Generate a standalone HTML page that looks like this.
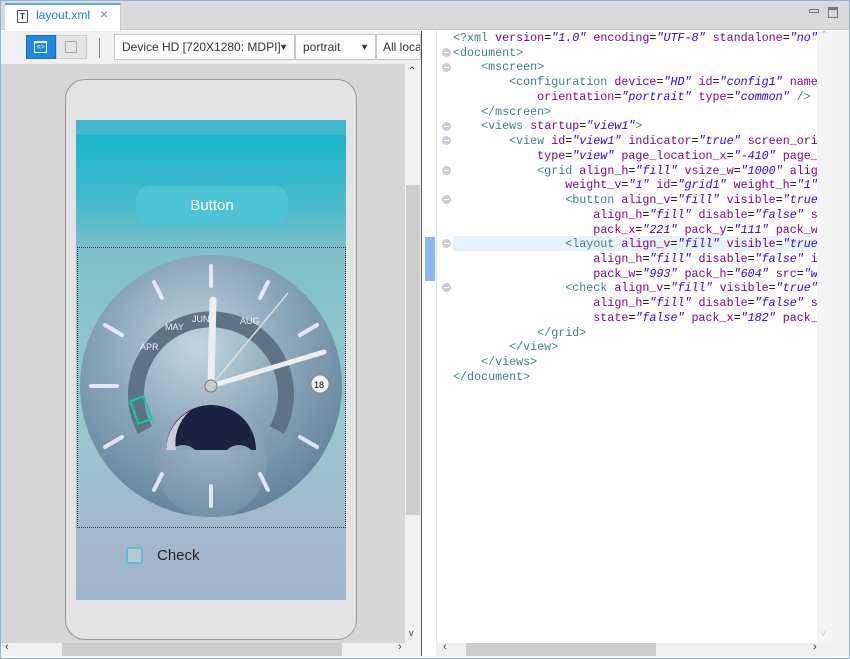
<!DOCTYPE html>
<html><head><style>
*{margin:0;padding:0;box-sizing:border-box}
body{width:850px;height:659px;overflow:hidden;background:#fff;font-family:"Liberation Sans",sans-serif;position:relative}
.abs{position:absolute}
.code{position:absolute;left:453px;top:31px;font-family:"Liberation Mono",monospace;font-size:11.7px;line-height:14.74px;white-space:pre;color:#000}
.t{color:#3f7f7f}.a{color:#7f007f}.v{color:#2a00ff;font-style:italic}
.fold{position:absolute;left:442px;width:9px;height:9px;border-radius:50%;background:#c8ccd4;}
.fold:after{content:"";position:absolute;left:2px;top:4px;width:5px;height:1px;background:#fff}
</style></head><body>
<div class="abs" style="left:0;top:0;width:850px;height:659px;border:1px solid #8fb4d8"></div>
<div class="abs" style="left:1px;top:1px;width:848px;height:29px;background:#d9d9d9;border-bottom:1px solid #c8c8c8"></div>
<div class="abs" style="left:5px;top:3px;width:116px;height:28px;background:#fff;border-top:2px solid #5fa8e0;border-right:1px solid #c8c8c8"></div>
<div class="abs" style="left:17px;top:10px;width:11px;height:13px;border:1px solid #555;border-radius:1px;font-size:8px;font-weight:bold;text-align:center;line-height:11px;color:#333">T</div>
<div class="abs" style="left:36px;top:8px;font-size:12px;color:#1e7fc8">layout.xml</div>
<div class="abs" style="left:100px;top:6px;font-size:14px;color:#888">×</div>
<div class="abs" style="left:809px;top:9px;width:10px;height:4px;border:1px solid #777;border-radius:1px"></div>
<div class="abs" style="left:828px;top:7px;width:10px;height:11px;border:1px solid #777;border-top-width:3px"></div>
<div class="abs" style="left:1px;top:31px;width:420px;height:33px;background:#f0f0f0"></div>
<div class="abs" style="left:26px;top:35px;width:30px;height:24px;background:#1e88e5;border:1px solid #1a6fc0"></div>
<div class="abs" style="left:34px;top:41px;width:13px;height:12px;border:1px solid #fff;font-size:7px;color:#fff;text-align:center;line-height:9px;border-top-width:2px">&lt;&gt;</div>
<div class="abs" style="left:56px;top:35px;width:31px;height:24px;background:#e4e4e4;border:1px solid #ccc"></div>
<div class="abs" style="left:65px;top:41px;width:12px;height:12px;border:1px solid #aaa"></div>
<div class="abs" style="left:99px;top:38px;width:1px;height:20px;background:#888"></div>
<div class="abs" style="left:114px;top:34px;width:181px;height:26px;background:#fff;border:1px solid #c8c8c8;font-size:12px;color:#333;padding:5px 7px">Device HD [720X1280: MDPI]<span style="position:absolute;right:6px;font-size:9px;top:7px">▼</span></div>
<div class="abs" style="left:295px;top:34px;width:81px;height:26px;background:#fff;border:1px solid #c8c8c8;font-size:12px;color:#333;padding:5px 7px">portrait<span style="position:absolute;right:6px;font-size:9px;top:7px">▼</span></div>
<div class="abs" style="left:376px;top:34px;width:45px;height:26px;background:#fff;border:1px solid #c8c8c8;font-size:12px;color:#333;padding:5px 6px;overflow:hidden;white-space:nowrap">All locale</div>
<div class="abs" style="left:1px;top:64px;width:420px;height:579px;background:#d6d6d6"></div>
<div class="abs" style="left:405px;top:64px;width:16px;height:579px;background:#f0f0f0"></div>
<div class="abs" style="left:406px;top:185px;width:14px;height:330px;background:#cdcdcd"></div>
<div class="abs" style="left:408px;top:66px;font-size:10px;color:#333">⌃</div>
<div class="abs" style="left:409px;top:628px;font-size:9px;color:#333">v</div>
<div class="abs" style="left:1px;top:643px;width:420px;height:13px;background:#f0f0f0"></div>
<div class="abs" style="left:62px;top:643px;width:280px;height:13px;background:#cdcdcd"></div>
<div class="abs" style="left:5px;top:641px;font-size:11px;color:#333">‹</div>
<div class="abs" style="left:398px;top:641px;font-size:11px;color:#333">›</div>
<div class="abs" style="left:421px;top:31px;width:4px;height:625px;background:#fff;border-left:1px solid #555"></div>
<div class="abs" style="left:65px;top:79px;width:292px;height:561px;background:#e3e3e3;border:1px solid #999;border-radius:20px"></div>
<div class="abs" style="left:76px;top:120px;width:270px;height:480px;background:linear-gradient(#1ab6cc 0px,#1ab6cc 15px,#4bbacb 90px,#7fc0ca 130px,#99c7d0 300px,#a3b9cc 400px,#a0b4cb 480px)"></div>
<div class="abs" style="left:76px;top:120px;width:270px;height:15px;background:#3fb8cc"></div>
<div class="abs" style="left:136px;top:186px;width:152px;height:40px;border-radius:14px;background:#4fc4d6;color:#fff;font-size:15px;text-align:center;line-height:40px">Button</div>
<div class="abs" style="left:77px;top:247px;width:269px;height:281px;border:1px dotted #334"></div>
<svg class="abs" style="left:76px;top:250px" width="270" height="275" viewBox="76 250 270 275">
<defs>
<radialGradient id="g" cx="0.45" cy="0.35" r="0.7"><stop offset="0" stop-color="#c2d6e0"/><stop offset="0.5" stop-color="#8aa6ba"/><stop offset="1" stop-color="#5f7f98"/></radialGradient>
<radialGradient id="g2" cx="0.5" cy="0.3" r="0.7"><stop offset="0" stop-color="#a8bece"/><stop offset="1" stop-color="#7a96ac"/></radialGradient>
<clipPath id="c"><circle cx="211" cy="386" r="131"/></clipPath>
<clipPath id="m"><path d="M166 450 A45 45 0 0 1 256 450 Z"/></clipPath>
</defs>
<circle cx="211" cy="386" r="131" fill="url(#g)"/>
<g clip-path="url(#c)">
<circle cx="211" cy="386" r="131" fill="none" stroke="#9ab" stroke-width="1" stroke-dasharray="1 6.8"/>
<path d="M145 430 A75 75 0 1 1 277 430" fill="none" stroke="#5d7386" stroke-width="16"/>
<circle cx="211" cy="462" r="56" fill="url(#g2)" opacity=".7"/>
<g clip-path="url(#m)">
<rect x="160" y="400" width="100" height="60" fill="#1a2440"/>
<circle cx="183" cy="462" r="17" fill="#8ea4b6"/>
<circle cx="239" cy="462" r="17" fill="#8ea4b6"/>
<circle cx="211" cy="466" r="13" fill="#8ea4b6"/>
<path d="M166 450 A45 45 0 0 1 190 411 A42 42 0 0 0 176 450 Z" fill="#ccd"/>
</g>
</g>
<g stroke="#eef" stroke-width="4" stroke-linecap="round" opacity=".9">
<line x1="211" y1="266" x2="211" y2="286"/><line x1="211" y1="486" x2="211" y2="506"/>
<line x1="91" y1="386" x2="117" y2="386"/>
<line x1="154" y1="282" x2="162" y2="298"/><line x1="268" y1="282" x2="260" y2="298"/>
<line x1="105" y1="325" x2="122" y2="335"/><line x1="317" y1="325" x2="300" y2="335"/>
<line x1="105" y1="447" x2="122" y2="437"/><line x1="317" y1="447" x2="300" y2="437"/>
<line x1="154" y1="490" x2="162" y2="474"/><line x1="268" y1="490" x2="260" y2="474"/>
</g>
<g font-size="9" fill="#eef" font-family="Liberation Sans"><text x="165" y="330">MAY</text><text x="192" y="322">JUN</text><text x="240" y="324">AUG</text><text x="140" y="350">APR</text></g>
<rect x="134" y="398" width="14" height="24" fill="none" stroke="#1c9" stroke-width="2" transform="rotate(-20 141 410)"/>
<line x1="211" y1="386" x2="213" y2="300" stroke="#eee" stroke-width="7" stroke-linecap="round"/>
<line x1="211" y1="386" x2="324" y2="352" stroke="#eee" stroke-width="5" stroke-linecap="round"/>
<line x1="211" y1="386" x2="288" y2="293" stroke="#ddd" stroke-width="1.5"/>
<circle cx="211" cy="386" r="6" fill="#ccc" stroke="#777"/>
<circle cx="320" cy="384" r="9" fill="#f4f4f4" stroke="#888"/>
<text x="314" y="388" font-size="9" font-family="Liberation Sans" fill="#000">18</text>
</svg>
<div class="abs" style="left:126px;top:547px;width:17px;height:17px;border:2px solid #5bc0d0;border-radius:3px;background:#b4c8d4"></div>
<div class="abs" style="left:157px;top:547px;font-size:15px;color:#222">Check</div>
<div class="abs" style="left:436px;top:31px;width:1px;height:612px;background:#e4e4e4"></div>
<div class="abs" style="left:425px;top:237px;width:10px;height:44px;background:#8ab8f0"></div>
<div class="abs" style="left:453px;top:236px;width:364px;height:15px;background:#e8f2fe"></div>
<div class="abs" style="left:817px;top:31px;width:15px;height:612px;background:#f4f4f4"></div>
<div class="abs" style="left:820px;top:30px;font-size:10px;color:#bbb">⌃</div>
<div class="abs" style="left:821px;top:628px;font-size:9px;color:#ccc">v</div>
<div class="abs" style="left:832px;top:31px;width:17px;height:625px;background:#f0f0f0"></div>
<div class="abs" style="left:436px;top:643px;width:396px;height:13px;background:#f0f0f0"></div>
<div class="abs" style="left:466px;top:643px;width:190px;height:13px;background:#cdcdcd"></div>
<div class="abs" style="left:443px;top:641px;font-size:11px;color:#333">‹</div>
<div class="abs" style="left:813px;top:641px;font-size:11px;color:#333">›</div>
<div class="fold" style="top:48px"></div><div class="fold" style="top:63px"></div><div class="fold" style="top:122px"></div><div class="fold" style="top:136px"></div><div class="fold" style="top:166px"></div><div class="fold" style="top:195px"></div><div class="fold" style="top:239px"></div><div class="fold" style="top:283px"></div>
<div class="abs" style="left:453px;top:31px;width:364px;height:360px;overflow:hidden"><div class="code" style="left:0;top:0"><span class="t">&lt;?xml</span> <span class="a">version</span>=<span class="v">"1.0"</span> <span class="a">encoding</span>=<span class="v">"UTF-8"</span> <span class="a">standalone</span>=<span class="v">"no"</span>?&gt;
<span class="t">&lt;document&gt;</span>
    <span class="t">&lt;mscreen&gt;</span>
        <span class="t">&lt;configuration</span> <span class="a">device</span>=<span class="v">"HD"</span> <span class="a">id</span>=<span class="v">"config1"</span> <span class="a">name</span>=
            <span class="a">orientation</span>=<span class="v">"portrait"</span> <span class="a">type</span>=<span class="v">"common"</span> <span class="t">/&gt;</span>
    <span class="t">&lt;/mscreen&gt;</span>
    <span class="t">&lt;views</span> <span class="a">startup</span>=<span class="v">"view1"</span><span class="t">&gt;</span>
        <span class="t">&lt;view</span> <span class="a">id</span>=<span class="v">"view1"</span> <span class="a">indicator</span>=<span class="v">"true"</span> <span class="a">screen_orientation</span>
            <span class="a">type</span>=<span class="v">"view"</span> <span class="a">page_location_x</span>=<span class="v">"-410"</span> <span class="a">page_location_y</span>
            <span class="t">&lt;grid</span> <span class="a">align_h</span>=<span class="v">"fill"</span> <span class="a">vsize_w</span>=<span class="v">"1000"</span> <span class="a">align_v</span>
                <span class="a">weight_v</span>=<span class="v">"1"</span> <span class="a">id</span>=<span class="v">"grid1"</span> <span class="a">weight_h</span>=<span class="v">"1"</span> 
                <span class="t">&lt;button</span> <span class="a">align_v</span>=<span class="v">"fill"</span> <span class="a">visible</span>=<span class="v">"true"</span>
                    <span class="a">align_h</span>=<span class="v">"fill"</span> <span class="a">disable</span>=<span class="v">"false"</span> <span class="a">style</span>
                    <span class="a">pack_x</span>=<span class="v">"221"</span> <span class="a">pack_y</span>=<span class="v">"111"</span> <span class="a">pack_w</span>
                <span class="t">&lt;layout</span> <span class="a">align_v</span>=<span class="v">"fill"</span> <span class="a">visible</span>=<span class="v">"true"</span>
                    <span class="a">align_h</span>=<span class="v">"fill"</span> <span class="a">disable</span>=<span class="v">"false"</span> <span class="a">id</span>
                    <span class="a">pack_w</span>=<span class="v">"993"</span> <span class="a">pack_h</span>=<span class="v">"604"</span> <span class="a">src</span>=<span class="v">"watch"</span>
                <span class="t">&lt;check</span> <span class="a">align_v</span>=<span class="v">"fill"</span> <span class="a">visible</span>=<span class="v">"true"</span>
                    <span class="a">align_h</span>=<span class="v">"fill"</span> <span class="a">disable</span>=<span class="v">"false"</span> <span class="a">style</span>
                    <span class="a">state</span>=<span class="v">"false"</span> <span class="a">pack_x</span>=<span class="v">"182"</span> <span class="a">pack_y</span>
            <span class="t">&lt;/grid&gt;</span>
        <span class="t">&lt;/view&gt;</span>
    <span class="t">&lt;/views&gt;</span>
<span class="t">&lt;/document&gt;</span></div></div>
</body></html>
